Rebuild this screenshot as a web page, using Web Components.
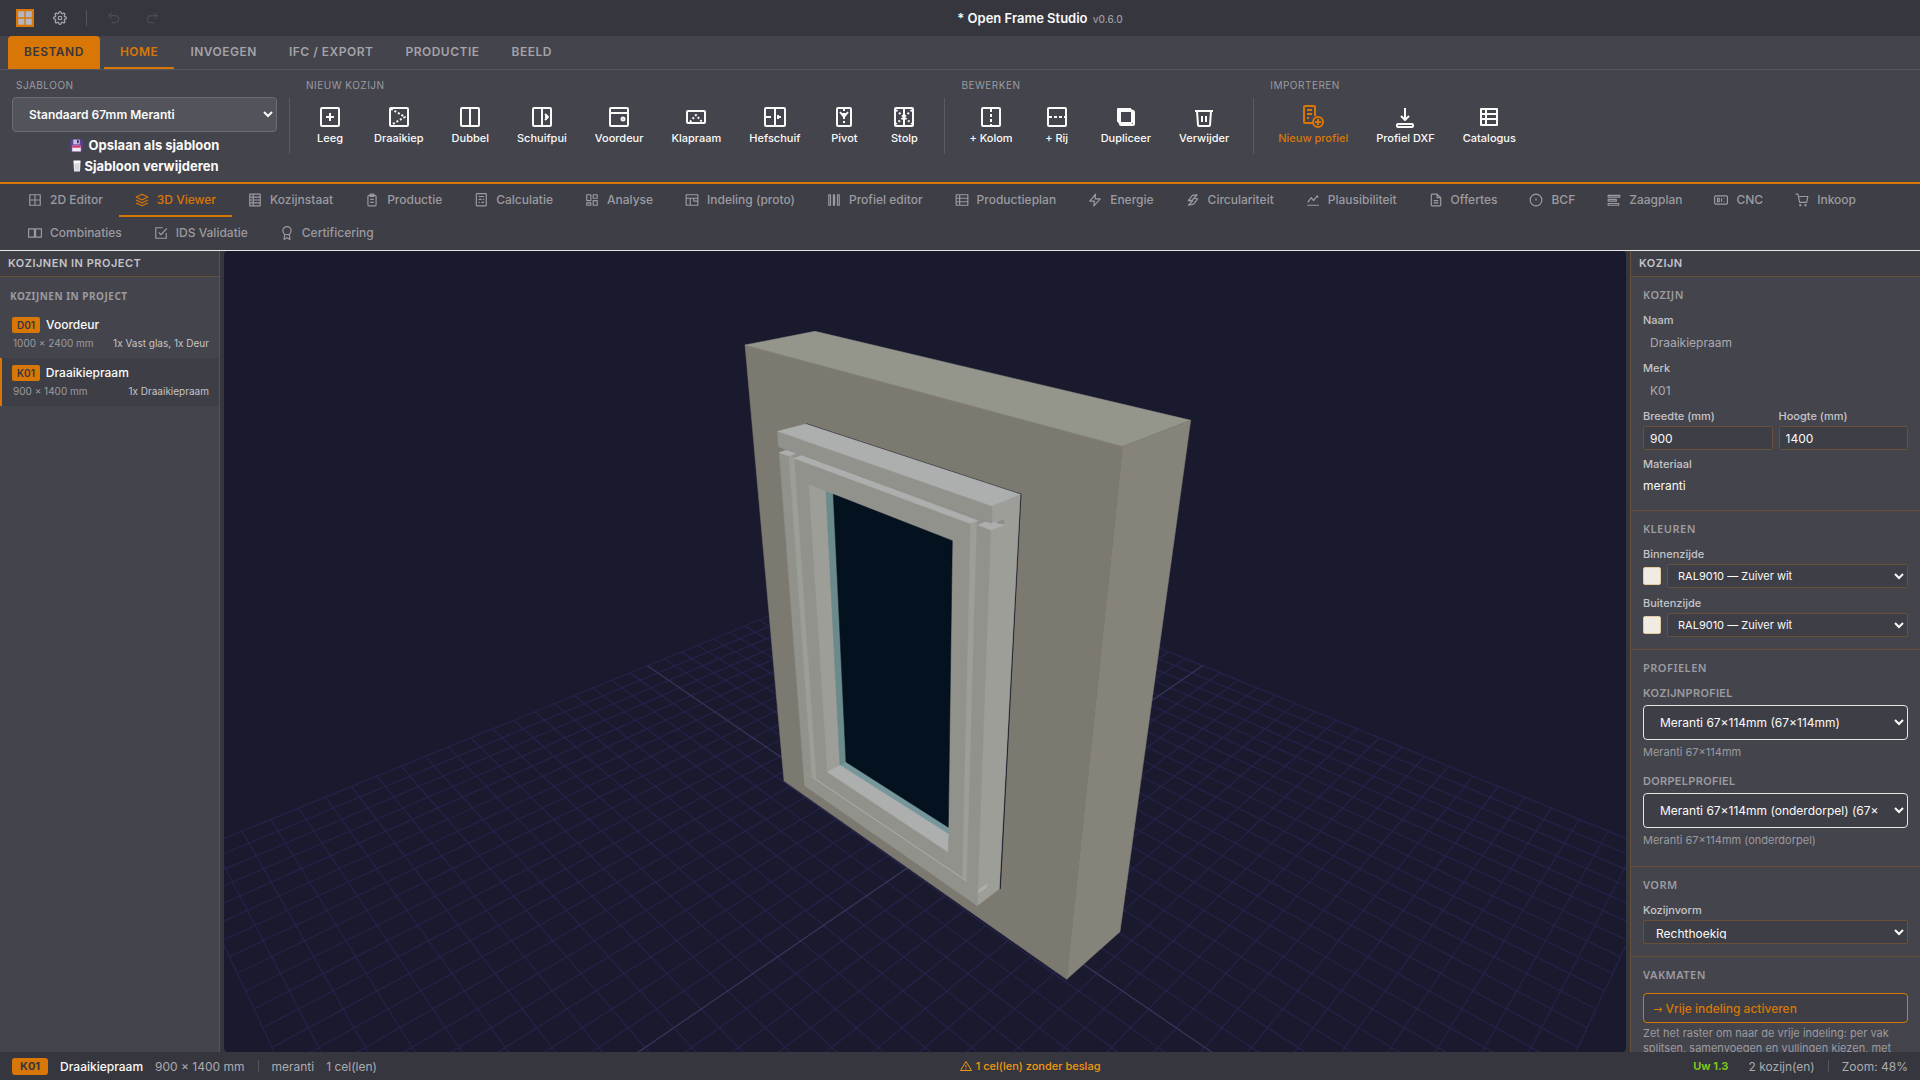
<!DOCTYPE html>
<html lang="nl">
<head>
<meta charset="utf-8">
<title>Open Frame Studio</title>
<style>
  html, body { margin: 0; height: 100%; overflow: hidden; }
  body {
    font-family: Inter, "Liberation Sans", sans-serif;
    --deep: #36363f; --panel: #44444c; --surface: #3e3e46; --raised: #53535b;
    --accent: #d97706; --brown: #69503a; --line: #55555d;
    --text: #fafaf9; --soft: #c4c4c8; --muted: #9b9ba0;
    color: var(--text); background: var(--deep); font-size: 12px;
  }
</style>
</head>
<body>
<ofs-app></ofs-app>
<script>
const dots = 'stroke-dasharray="2 2"';
const ICONS = {
  logo: '<path d="M0 0h24v24H0z" fill="#d97706" stroke="none"/><path d="M3 3h8v8H3zM13 3h8v8h-8zM3 13h8v8H3zM13 13h8v8h-8z" fill="#b0b6c6" stroke="none"/>',
  gear: '<circle cx="12" cy="12" r="3"/><path d="M19.4 15a1.65 1.65 0 0 0 .33 1.82l.06.06a2 2 0 0 1 0 2.83 2 2 0 0 1-2.83 0l-.06-.06a1.65 1.65 0 0 0-1.82-.33 1.65 1.65 0 0 0-1 1.51V21a2 2 0 0 1-2 2 2 2 0 0 1-2-2v-.09A1.65 1.65 0 0 0 9 19.4a1.65 1.65 0 0 0-1.82.33l-.06.06a2 2 0 0 1-2.83 0 2 2 0 0 1 0-2.83l.06-.06a1.65 1.65 0 0 0 .33-1.82 1.65 1.65 0 0 0-1.51-1H3a2 2 0 0 1-2-2 2 2 0 0 1 2-2h.09A1.65 1.65 0 0 0 4.6 9a1.65 1.65 0 0 0-.33-1.82l-.06-.06a2 2 0 0 1 0-2.83 2 2 0 0 1 2.83 0l.06.06a1.65 1.65 0 0 0 1.82.33H9a1.65 1.65 0 0 0 1-1.51V3a2 2 0 0 1 2-2 2 2 0 0 1 2 2v.09a1.65 1.65 0 0 0 1 1.51 1.65 1.65 0 0 0 1.82-.33l.06-.06a2 2 0 0 1 2.83 0 2 2 0 0 1 0 2.83l-.06.06a1.65 1.65 0 0 0-.33 1.82V9a1.65 1.65 0 0 0 1.51 1H21a2 2 0 0 1 2 2 2 2 0 0 1-2 2h-.09a1.65 1.65 0 0 0-1.51 1z"/>',
  undo: '<path d="M8 3 3 8l5 5"/><path d="M3 8h11a6 6 0 0 1 0 12H8"/>',
  redo: '<path d="m16 3 5 5-5 5"/><path d="M21 8H10a6 6 0 0 0 0 12h6"/>',
  leeg: '<rect x="3" y="3" width="18" height="18" rx="1"/><path d="M12 8v8M8 12h8"/>',
  draaikiep: `<rect x="3" y="3" width="18" height="18" rx="1"/><path d="m4 4 14 8-14 8" ${dots}/>`,
  dubbel: '<rect x="3" y="3" width="18" height="18" rx="1"/><path d="M12 3v18"/>',
  schuifpui: '<rect x="3" y="3" width="18" height="18" rx="1"/><path d="M12 3v18M15 9l3 3-3 3M15 12h3"/>',
  voordeur: '<rect x="3" y="3" width="18" height="18" rx="1"/><path d="M3 8h18"/><circle cx="16" cy="14" r="1.500"/>',
  klapraam: `<rect x="3" y="6" width="18" height="12" rx="1"/><path d="m6 17 6-7 6 7" ${dots}/>`,
  hefschuif: '<rect x="2" y="3" width="20" height="18" rx="1"/><path d="M12 3v18M3 12h5M6 11v2M14 12h4M15 10v4"/>',
  pivot: `<rect x="5" y="3" width="14" height="18" rx="1"/><path d="m8 7 4 5 4-5M10 9h4"/><path d="M12 4v17" ${dots}/>`,
  stolp: `<rect x="3" y="3" width="18" height="18" rx="1"/><path d="M12 3v18"/><path d="m4 5 8 7-8 7M20 5l-8 7 8 7" ${dots}/>`,
  kolom: `<rect x="3" y="3" width="18" height="18" rx="1"/><path d="M12 4v17" stroke-dasharray="3 2"/>`,
  rij: `<rect x="3" y="3" width="18" height="18" rx="1"/><path d="M4 12h17" stroke-dasharray="3 2"/>`,
  dupliceer: '<rect x="5" y="5" width="13" height="13" rx="1"/><rect x="6" y="6" width="14" height="14" rx="1"/><path d="M4 17V4h13"/>',
  verwijder: '<path d="M3 6h18M5 6l1 14q0 1 1 1h10q1 0 1-1l1-14M10 11v6M14 11v6"/>',
  nieuwprofiel: '<path d="M12 18H4q-1 0-1-1V2q0-1 1-1h9q1 0 1 1v9M6 5h5M6 9h5M6 13h2"/><circle cx="17" cy="17" r="5"/><path d="M17 14v6M14 17h6"/>',
  dxf: '<path d="M12 3v12M8 11l4 4 4-4"/><rect x="4" y="19" width="16" height="3" rx="1"/>',
  catalogus: '<path d="M4 4h16v16H4zM4 9h16M4 14h16M9 4v16"/>',
  grid: '<path d="M3 3h18v18H3zM3 12h18M12 3v18"/>',
  layers: '<path d="m12 2 10 5-10 5L2 7zM2 12l10 5 10-5M2 17l10 5 10-5"/>',
  list: '<path d="M3 2h18v20H3zM3 7h18M3 12h18M3 17h18M9 2v20"/>',
  clipboard: '<rect x="5" y="4" width="14" height="18" rx="2"/><path d="M9 2h6v4H9zM9 11h6M9 16h6"/>',
  calc: '<rect x="4" y="1" width="17" height="21" rx="1"/><path d="M8 6h9M8 11h5M8 16h2M15 11h2M13 16h4"/>',
  dash: '<path d="M3 3h7v10H3zM14 3h7v6h-7zM14 13h7v8h-7zM3 17h7v4H3z"/>',
  layout: '<path d="M2 3h20v18H2zM2 9h20M9 9v12M15 14h7M15 9v5"/>',
  bars: '<path d="M3 3h3v18H3zM11 3h2v18h-2zM18 3h3v18h-3z"/>',
  plan: '<path d="M2 3h20v18H2zM2 9h20M8 3v18M2 15h20"/>',
  bolt: '<path d="M13 2 3 14h8l-1 8 11-12h-9z"/>',
  circ: '<path d="m4 13 7-9 8-1-8 9zM13 9l7 1-7 9-9 2 8-8M4 13l8 1"/>',
  chart: '<path d="M2 21h20M3 16l6-8 4 5 6-8 2 3"/>',
  doc: '<path d="M14 2H5q-1 0-1 1v18q0 1 1 1h14q1 0 1-1V8zM14 2v6h6M8 13h8M8 17h8"/>',
  info: '<circle cx="12" cy="12" r="10"/><path d="M12 9v4"/>',
  lines: '<path d="M2 4h20v3H2zM2 11h14v3H2zM2 18h18v3H2z"/>',
  cnc: '<rect x="1" y="5" width="22" height="14" rx="2"/><path d="M6 9h3v6H6zM13 9v6M17 9v1M17 14v1"/>',
  cart: '<circle cx="9" cy="21" r="1"/><circle cx="18" cy="21" r="1"/><path d="M1 2h4l3 14h12l2-10H6"/>',
  combi: '<path d="M1 5h10v14H1zM13 5h10v14H13z"/>',
  check: '<path d="m8 11 4 4L22 4M21 12v9H3V3h12"/>',
  award: '<circle cx="12" cy="8" r="7"/><path d="m8 14-1 9 5-3 5 3-1-9"/>',
  warn: '<path d="M12 3 1 21h22zM12 10v5M12 17v2"/>',
  floppy: '<path d="M1 1h20l2 2v20H1z" fill="#5d3f9e" stroke="none"/><path d="M6 1h12v9H6z" fill="#c9bfe6" stroke="none"/><path d="M13 2h3v6h-3z" fill="#3a2a66" stroke="none"/><path d="M4 12h16v11H4z" fill="#f3e9f4" stroke="none"/><path d="M4 12h16v4H4z" fill="#d6336c" stroke="none"/>',
  bin: '<path d="M5 4h14l-1 19H6z" fill="#e6e6e8" stroke="none"/><path d="M5 1h14v4H5z" fill="#fff" stroke="none"/><path d="M10 8v12M14 8v12" stroke="#a9a9ae" stroke-width="1"/>'
};

function define(name, css, html, setup) {
  const template = document.createElement('template');
  template.innerHTML = `<style>*{box-sizing:border-box}${css}</style>${html}`;
  customElements.define(name, class extends HTMLElement {
    connectedCallback() {
      if (this.shadowRoot) return;
      this.attachShadow({ mode: 'open' }).append(template.content.cloneNode(true));
      if (setup) setup(this, this.shadowRoot);
    }
  });
}

define('ofs-icon', `:host{display:block;flex:none;line-height:0}
  svg{display:block;fill:none;stroke:currentColor;stroke-linecap:butt;stroke-linejoin:round}`, '',
  (host, root) => {
    const size = host.getAttribute('size') || 14;
    const box = document.createElement('div');
    box.innerHTML = `<svg width="${size}" height="${size}" viewBox="0 0 24 24" stroke-width="${host.getAttribute('weight') || 2}" aria-hidden="true">${ICONS[host.getAttribute('name')]}</svg>`;
    root.append(box);
  });

define('ofs-titlebar', `
  :host{display:flex;height:36px;background:var(--deep);align-items:center}
  nav{display:flex;align-items:center;width:160px;padding-left:16px}
  button{border:0;background:none;padding:0;color:#aeaeb2;display:flex}
  .gear{margin-left:19px}
  .rule{width:1px;height:16px;background:#55555d;margin:0 20px 0 19px}
  button:disabled{color:#4b4b53}
  .redo{margin-left:24px}
  h1{flex:1;margin:0;text-align:center;font-size:13px;line-height:16px;font-weight:600}
  small{font-size:10px;font-weight:500;color:var(--muted);margin-left:2px}`,
  `<nav><ofs-icon name="logo" size="18"></ofs-icon>
    <button class="gear" aria-label="Instellingen"><ofs-icon name="gear" size="14"></ofs-icon></button>
    <span class="rule"></span>
    <button disabled aria-label="Ongedaan maken"><ofs-icon name="undo" size="14"></ofs-icon></button>
    <button class="redo" disabled aria-label="Opnieuw"><ofs-icon name="redo" size="14"></ofs-icon></button></nav>
   <h1>* Open Frame Studio <small>v0.6.0</small></h1>`);

define('ofs-ribbon-tabs', `
  :host{display:flex;height:34px;padding-left:8px;background:var(--panel);border-bottom:1px solid var(--line)}
  button{border:0;background:none;font:600 12px/15px Inter,sans-serif;letter-spacing:.5px;padding:0 16px;color:#a3a3a8;border-bottom:2px solid transparent}
  .file{background:var(--accent);border-color:var(--accent);color:#36363e;border-radius:4px 4px 0 0;margin-right:4px}
  .on{color:var(--accent);border-bottom-color:var(--accent)}`,
  `<button class="file">BESTAND</button><button class="on">HOME</button><button>INVOEGEN</button><button>IFC / EXPORT</button><button>PRODUCTIE</button><button>BEELD</button>`);

define('ofs-group', `
  :host{display:block;padding-top:8px}
  header{font-size:10px;line-height:14px;letter-spacing:.5px;color:var(--muted);padding-left:4px;margin-bottom:5px}
  div{display:flex;gap:4px}
  :host([stack]) div{flex-direction:column;align-items:center;gap:5px}`,
  `<header></header><div><slot></slot></div>`,
  (h, r) => r.querySelector('header').textContent = h.getAttribute('label'));

define('ofs-tool', `
  :host{display:block}
  button{display:flex;flex-direction:column;align-items:center;gap:2px;min-width:56px;padding:8px 12px;border:0;background:none;color:var(--text);font:500 11px/14px Inter,sans-serif;white-space:nowrap}
  :host([accent]) button{color:var(--accent)}`,
  `<button></button>`,
  (h, r) => r.querySelector('button').innerHTML = `<ofs-icon name="${h.getAttribute('icon')}" size="24"></ofs-icon><span>${h.getAttribute('label')}</span>`);

const tool = (icon, label, extra = '') => `<ofs-tool icon="${icon}" label="${label}" ${extra}></ofs-tool>`;
define('ofs-ribbon', `
  :host{display:flex;gap:12px;height:114px;padding:0 12px;background:var(--panel);border-bottom:2px solid var(--accent)}
  .rule{width:1px;height:56px;margin-top:28px;background:#5b5b60}
  select{width:265px;height:35px;border:1px solid #6c6c72;border-radius:4px;background:var(--raised);color:var(--text);font:600 12px/15px Inter,sans-serif;padding:0 0 0 12px}
  .plain{display:flex;align-items:center;gap:6px;border:0;background:none;padding:0;color:var(--text);font:700 13px/16px Inter,sans-serif}
  .tight{gap:2px}`,
  `<ofs-group label="SJABLOON" stack>
     <select aria-label="Sjabloon"><option>Standaard 67mm Meranti</option></select>
     <button class="plain"><ofs-icon name="floppy" size="13"></ofs-icon><span>Opslaan als sjabloon</span></button>
     <button class="plain tight"><ofs-icon name="bin" size="12"></ofs-icon><span>Sjabloon verwijderen</span></button>
   </ofs-group><span class="rule"></span>
   <ofs-group label="NIEUW KOZIJN">${tool('leeg','Leeg')}${tool('draaikiep','Draaikiep')}${tool('dubbel','Dubbel')}${tool('schuifpui','Schuifpui')}${tool('voordeur','Voordeur')}${tool('klapraam','Klapraam')}${tool('hefschuif','Hefschuif')}${tool('pivot','Pivot')}${tool('stolp','Stolp')}</ofs-group>
   <span class="rule"></span>
   <ofs-group label="BEWERKEN">${tool('kolom','+ Kolom')}${tool('rij','+ Rij')}${tool('dupliceer','Dupliceer')}${tool('verwijder','Verwijder')}</ofs-group>
   <span class="rule"></span>
   <ofs-group label="IMPORTEREN">${tool('nieuwprofiel','Nieuw profiel','accent')}${tool('dxf','Profiel DXF')}${tool('catalogus','Catalogus')}</ofs-group>`);

define('ofs-view-tab', `
  :host{display:block}
  button{display:flex;align-items:center;gap:8px;height:33px;padding:0 16px;border:0;border-bottom:2px solid transparent;background:none;color:var(--muted);font:500 12px/15px Inter,sans-serif;white-space:nowrap}
  :host([active]) button{color:var(--accent);border-bottom-color:var(--accent)}`,
  `<button></button>`,
  (h, r) => r.querySelector('button').innerHTML = `<ofs-icon name="${h.getAttribute('icon')}"></ofs-icon><span>${h.getAttribute('label')}</span>`);

const VIEWS = [['grid','2D Editor'],['layers','3D Viewer'],['list','Kozijnstaat'],['clipboard','Productie'],['calc','Calculatie'],['dash','Analyse'],['layout','Indeling (proto)'],['bars','Profiel editor'],['plan','Productieplan'],['bolt','Energie'],['circ','Circulariteit'],['chart','Plausibiliteit'],['doc','Offertes'],['info','BCF'],['lines','Zaagplan'],['cnc','CNC'],['cart','Inkoop'],['combi','Combinaties'],['check','IDS Validatie'],['award','Certificering']];
define('ofs-view-tabs', `:host{display:flex;flex-wrap:wrap;padding:0 12px;background:var(--surface);border-bottom:1px solid #e7e5e4}`,
  VIEWS.map(([i, l]) => `<ofs-view-tab icon="${i}" label="${l}" ${l === '3D Viewer' ? 'active' : ''}></ofs-view-tab>`).join(''));

define('ofs-item', `
  :host{display:block;height:48px;padding:7px 10px 0;border-left:2px solid transparent;font-size:10px;line-height:14px}
  :host([active]){background:var(--surface);border-left-color:var(--accent)}
  p{margin:0;display:flex;align-items:center;gap:6px;font-size:12px;font-weight:500}
  b{height:16px;padding:0 5px;border-radius:2px;background:var(--accent);color:#36363e;font:600 10px/16px Inter,sans-serif}
  div{display:flex;justify-content:space-between;margin-top:3px;padding-left:1px;color:var(--muted)}
  i{font-style:normal;color:var(--soft)}`,
  `<p><b></b><span><slot></slot></span></p><div><span class="size"></span><i></i></div>`,
  (h, r) => {
    r.querySelector('b').textContent = h.getAttribute('code');
    r.querySelector('.size').textContent = h.getAttribute('size');
    r.querySelector('i').textContent = h.getAttribute('cells');
  });

define('ofs-panel', `
  :host{display:flex;flex-direction:column;min-height:0;overflow:hidden;background:var(--panel)}
  header{flex:none;height:26px;padding:0 8px;background:var(--surface);border-bottom:1px solid var(--brown);color:var(--soft);font-size:11px;line-height:25px;font-weight:600;letter-spacing:.5px}
  div{flex:1;min-height:0;overflow:hidden}`,
  `<header></header><div><slot></slot></div>`,
  (h, r) => r.querySelector('header').textContent = h.getAttribute('label'));

define('ofs-section', `
  :host{display:block;padding:12px;border-bottom:1px solid var(--brown)}
  :host(:last-child){border-bottom:0}
  h3{margin:0 0 12px;font:600 11px/12px "Noto Sans",sans-serif;letter-spacing:.5px;color:var(--muted)}
  div{display:flex;flex-direction:column;gap:7px}
  :host([wide]) div{gap:8px}`,
  `<h3></h3><div><slot></slot></div>`,
  (h, r) => r.querySelector('h3').textContent = h.getAttribute('label'));

const boxCss = `height:24px;width:100%;min-width:0;border:1px solid var(--brown);border-radius:2px;background:var(--surface);color:var(--text);`;
define('ofs-field', `
  :host{display:block;flex:1;min-width:0}
  label{display:block;font-size:11px;line-height:14px;font-weight:500;color:var(--soft);margin-bottom:3px}
  .row{display:flex;align-items:center;gap:6px}
  input{${boxCss}padding:0 6px;font:400 12px/15px Inter,sans-serif}
  input[readonly]{background:none;border-color:transparent;color:#ababaf}
  output{display:block;line-height:24px;font-size:12px}
  select{${boxCss}padding:0 0 0 6px;font:400 11px/14px Inter,sans-serif}
  select.tall{padding:4px 0 4px 8px;font-size:12px;line-height:15px}
  .swatch{flex:none;width:18px;height:18px;border:1px solid #e3c9a0;border-radius:2px;background:#f1ece1}`,
  `<label for="v"></label><div class="row"></div>`,
  (h, r) => {
    const value = h.getAttribute('value');
    r.querySelector('label').textContent = h.getAttribute('label');
    r.querySelector('.row').innerHTML = {
      text: `<input id="v" value="${value}">`,
      readonly: `<input id="v" readonly value="${value}">`,
      output: `<output id="v">${value}</output>`,
      color: `<span class="swatch"></span><select id="v"><option>${value}</option></select>`,
      select: `<select id="v" class="tall"><option>${value}</option></select>`
    }[h.getAttribute('type')];
  });

define('ofs-profile', `
  :host{display:block;margin-bottom:8px}
  :host(:last-child){margin-bottom:7px}
  label{display:block;font-size:11px;line-height:14px;font-weight:600;letter-spacing:.3px;color:var(--muted);margin-bottom:5px}
  select{display:block;width:100%;height:35px;border:1px solid #e7e5e4;border-radius:4px;background:var(--surface);color:var(--text);padding:0 12px;font:400 12px/15px Inter,sans-serif}
  p{margin:5px 0 0;font-size:11px;line-height:14px;color:var(--muted)}`,
  `<label for="p"></label><select id="p"><option></option></select><p></p>`,
  (h, r) => {
    r.querySelector('label').textContent = h.getAttribute('label');
    r.querySelector('option').textContent = h.getAttribute('value');
    r.querySelector('p').textContent = h.getAttribute('hint');
  });

define('ofs-free-layout', `
  :host{display:block}
  button{display:block;width:100%;height:30px;padding:0 9px;text-align:left;border:1px solid var(--accent);border-radius:4px;background:var(--surface);color:var(--accent);font:500 12px/15px Inter,sans-serif}
  span{font:11px/12px "DejaVu Sans",sans-serif}
  p{margin:3px 0 0;font-size:11px;line-height:15px;color:var(--muted)}`,
  `<button><span>→</span> Vrije indeling activeren</button><p>Zet het raster om naar de vrije indeling: per vak splitsen, samenvoegen en vullingen kiezen, met</p>`);

/* Perspective of the ground plane: u runs across the screen, v towards the camera,
   both with half the plane's diagonal equal to 2. */
function project(a, b) {
  const u = a - b, v = a + b, w = 1 - 0.3387 * v;
  return [925 + 371.6 * u / w, (855.8 - 35.4 * v) / w].map(n => n.toFixed(1)).join(' ');
}
function groundLines() {
  let minor = '', major = '';
  for (let i = -20; i <= 20; i++) {
    const k = i / 20, d = `M${project(k, -1)}L${project(k, 1)}M${project(-1, k)}L${project(1, k)}`;
    if (i) minor += d; else major += d;
  }
  return `<g stroke-width="1.3"><path d="${minor}" stroke="#242248"/><path d="${major}" stroke="#37355a"/></g>`;
}
const face = (fill, pts) => `<polygon fill="${fill}" stroke="${fill}" stroke-width=".5" points="${pts}"/>`;
const FRONT = '#91928c', SIDE = '#9d9e98', TOP = '#adafae';
define('ofs-viewport', `
  :host{display:block;min-width:0;min-height:0;overflow:hidden;border-radius:4px;background:#1a1a2e}
  svg{display:block;width:100%;height:100%;fill:none}`,
  `<svg viewBox="224 251 1402 801" preserveAspectRatio="xMidYMid slice" role="img" aria-label="3D-weergave">${groundLines()}
    ${face('#7c7970', '745,345 1122.700,446.300 1066.700,979.300 784,781')}
    ${face('#94968c', '745,345 815,331.300 1190.700,420.300 1122.700,446.300')}
    ${face('#86837a', '1122.700,446.300 1190.700,420.300 1120,931.700 1066.700,979.300')}
    <path d="M806 424 1020.700 494.300 1000 889" stroke="#1d1d2c" stroke-width="1.500"/>
    ${face(FRONT, '779.300,452.700 786.700,450 796,453 991,523 991,530 977.300,905.700 804.700,785.700')}
    ${face(SIDE, '992,506 1020.300,494.300 999.300,888.700 977.300,905.700 991,530')}
    ${face(TOP, '779.300,452.700 786.700,450 796,453.500 789,456')}
    ${face(SIDE, '789,456 794,457 816,778 812,777')}
    ${face(TOP, '794,458.300 801.700,455.300 978.300,520.700 970.700,523.700')}
    ${face(SIDE, '970.700,523.700 976.500,522.500 966.500,881 962.500,877')}
    ${face(TOP, '978,525 985,522 1004,523 1004,525 991,530')}
    ${face('#8b8c86', '997,522.500 1004,519.500 1004,524 997,523')}
    ${face(FRONT, '777.700,431.300 992,506 992,523.300 778.300,446.700')}
    ${face(TOP, '777.700,431.300 806,424 1020.300,494.300 992,506')}
    ${face(SIDE, '809,484.700 826,491.700 840,765.300 827.500,772')}
    ${face('#6b8a8b', '826,491.700 833.300,494.300 846,762 840,765.300')}
    ${face('#75979b', '840,765.300 846,762 948.300,827.300 948.300,834')}
    ${face(TOP, '827.500,772 840,765.300 948.300,834 947.700,851.700')}
    ${face('#04111f', '833.300,494.300 952.300,540.700 948.300,827.300 846,762')}
    <path d="M813 777.500 966.500 881" stroke="#adafae"/><path d="M804.500 773.500 812 778" stroke="#9d9e98" stroke-width=".7"/>
    ${face(TOP, '978.500,890 987,884 987,887 978.500,893')}
  </svg>`);

define('ofs-status', `
  :host{display:flex;justify-content:space-between;align-items:center;height:28px;padding:0 12px;background:var(--deep);color:#ababaf;line-height:15px}
  div{display:flex;align-items:center;gap:12px}
  b{padding:0 8px;border-radius:3px;background:var(--accent);color:#36363e;font-size:11px;line-height:17px;font-weight:700}
  strong{font-weight:500;color:var(--text)}
  i{width:1px;height:12px;background:#55555d;margin:0 1px}
  .warn{gap:4px;margin-right:10px;color:#f0960f;font-size:11px;font-weight:500}
  em{font-style:normal;font-weight:700;font-size:11px;color:#7ac51c;margin-right:8px}`,
  `<div><b>K01</b><strong>Draaikiepraam</strong><span>900 × 1400 mm</span><i></i><span>meranti</span><span>1 cel(len)</span></div>
   <div class="warn"><ofs-icon name="warn" size="12"></ofs-icon><span>1 cel(len) zonder beslag</span></div>
   <div><em>Uw 1.3</em><span>2 kozijn(en)</span><i></i><span>Zoom: 48%</span></div>`);

define('ofs-app', `
  :host{display:grid;grid-template-rows:auto auto auto auto minmax(0,1fr) auto;height:100vh;background:var(--deep)}
  main{display:grid;grid-template-columns:220px minmax(0,1fr) 290px;column-gap:4px;min-height:0}
  .left{border-right:1px solid var(--brown)}
  .right{border-left:1px solid var(--brown)}
  h2{margin:0;padding:13px 10px 8px;font:700 10px/12px "Noto Sans",sans-serif;letter-spacing:.5px;color:var(--muted)}
  .pair{display:flex;gap:6px}`,
  `<ofs-titlebar></ofs-titlebar><ofs-ribbon-tabs></ofs-ribbon-tabs><ofs-ribbon></ofs-ribbon><ofs-view-tabs></ofs-view-tabs>
   <main>
     <ofs-panel class="left" label="KOZIJNEN IN PROJECT">
       <h2>KOZIJNEN IN PROJECT</h2>
       <ofs-item code="D01" size="1000 × 2400 mm" cells="1x Vast glas, 1x Deur">Voordeur</ofs-item>
       <ofs-item active code="K01" size="900 × 1400 mm" cells="1x Draaikiepraam">Draaikiepraam</ofs-item>
     </ofs-panel>
     <ofs-viewport></ofs-viewport>
     <ofs-panel class="right" label="KOZIJN">
       <ofs-section label="KOZIJN">
         <ofs-field type="readonly" label="Naam" value="Draaikiepraam"></ofs-field>
         <ofs-field type="readonly" label="Merk" value="K01"></ofs-field>
         <span class="pair"><ofs-field type="text" label="Breedte (mm)" value="900"></ofs-field><ofs-field type="text" label="Hoogte (mm)" value="1400"></ofs-field></span>
         <ofs-field type="output" label="Materiaal" value="meranti"></ofs-field>
       </ofs-section>
       <ofs-section wide label="KLEUREN">
         <ofs-field type="color" label="Binnenzijde" value="RAL9010 — Zuiver wit"></ofs-field>
         <ofs-field type="color" label="Buitenzijde" value="RAL9010 — Zuiver wit"></ofs-field>
       </ofs-section>
       <ofs-section label="PROFIELEN">
         <ofs-profile label="KOZIJNPROFIEL" value="Meranti 67×114mm (67×114mm)" hint="Meranti 67×114mm"></ofs-profile>
         <ofs-profile label="DORPELPROFIEL" value="Meranti 67×114mm (onderdorpel) (67×114mm)" hint="Meranti 67×114mm (onderdorpel)"></ofs-profile>
       </ofs-section>
       <ofs-section label="VORM"><ofs-field type="select" label="Kozijnvorm" value="Rechthoekig"></ofs-field></ofs-section>
       <ofs-section label="VAKMATEN"><ofs-free-layout></ofs-free-layout></ofs-section>
     </ofs-panel>
   </main>
   <ofs-status></ofs-status>`);
</script>
</body>
</html>
